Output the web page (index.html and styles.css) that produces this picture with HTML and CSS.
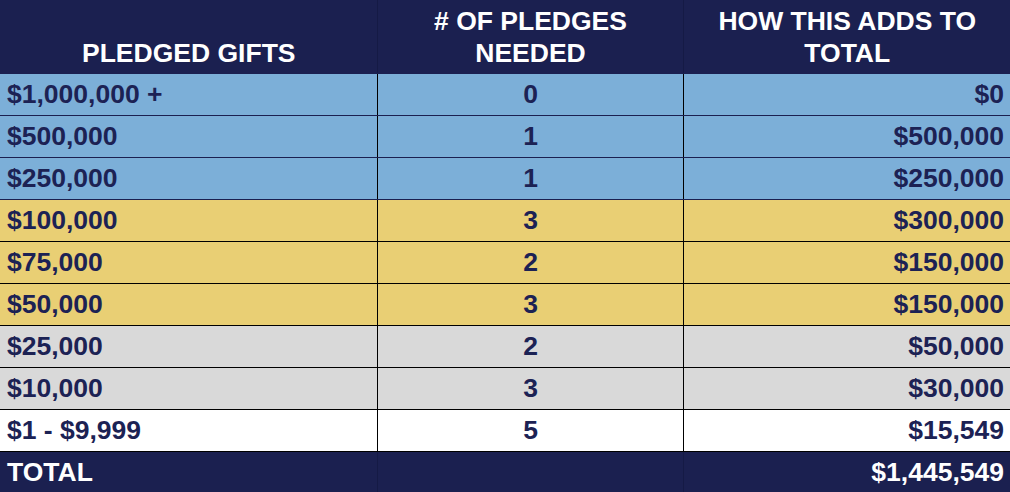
FILE: index.html
```html
<!DOCTYPE html>
<html>
<head>
<meta charset="utf-8">
<link rel="stylesheet" href="styles.css">
</head>
<body>
<table class="gifts">
  <colgroup>
    <col class="c1">
    <col class="c2">
    <col class="c3">
  </colgroup>
  <thead>
    <tr class="head">
      <th class="center">PLEDGED GIFTS</th>
      <th class="center"># OF PLEDGES<br>NEEDED</th>
      <th class="center">HOW THIS ADDS TO<br>TOTAL</th>
    </tr>
  </thead>
  <tbody>
    <tr class="blue first"><td>$1,000,000 +</td><td class="center">0</td><td class="right">$0</td></tr>
    <tr class="blue"><td>$500,000</td><td class="center">1</td><td class="right">$500,000</td></tr>
    <tr class="blue"><td>$250,000</td><td class="center">1</td><td class="right">$250,000</td></tr>
    <tr class="gold"><td>$100,000</td><td class="center">3</td><td class="right">$300,000</td></tr>
    <tr class="gold"><td>$75,000</td><td class="center">2</td><td class="right">$150,000</td></tr>
    <tr class="gold"><td>$50,000</td><td class="center">3</td><td class="right">$150,000</td></tr>
    <tr class="grey"><td>$25,000</td><td class="center">2</td><td class="right">$50,000</td></tr>
    <tr class="grey"><td>$10,000</td><td class="center">3</td><td class="right">$30,000</td></tr>
    <tr class="white"><td>$1 - $9,999</td><td class="center">5</td><td class="right">$15,549</td></tr>
  </tbody>
  <tfoot>
    <tr class="total"><td>TOTAL</td><td></td><td class="right">$1,445,549</td></tr>
  </tfoot>
</table>
</body>
</html>
```

FILE: styles.css
```css
html, body {
  margin: 0;
  padding: 0;
  background: #ffffff;
}

.gifts {
  width: 1010px;
  border-collapse: collapse;
  table-layout: fixed;
  font-family: "Liberation Sans", Arial, sans-serif;
  font-weight: bold;
  font-size: 26.5px;
  color: #1c2254;
}

.c1 { width: 377px; }
.c2 { width: 306px; }
.c3 { width: 327px; }

.gifts th,
.gifts td {
  padding: 0 6px 0 7px;
  white-space: nowrap;
  border: 1px solid #000;
  line-height: 32px;
}

.head th {
  background: #1b2050;
  color: #ffffff;
  height: 73px;
  vertical-align: bottom;
  padding-bottom: 4px;
  padding-top: 0;
  border-top: none;
  border-left: none;
  border-right: 1px solid #151a45;
  border-bottom: 1px solid #1b2050;
  box-sizing: border-box;
}

.head th:last-child { border-right: none; }

.gifts tbody td {
  height: 42px;
  box-sizing: border-box;
  vertical-align: middle;
}

.gifts tbody td:first-child { border-left: none; }
.gifts tbody td:last-child { border-right: none; }

.center { text-align: center; }
.right { text-align: right; }

.blue td { background: #7cafd8; border-bottom-color: #1b2050; }
.blue td { border-top-color: #1b2050; }
.gold td { background: #e9cf74; }
.grey td { background: #d9d9d9; }
.white td { background: #ffffff; }

.total td {
  background: #1b2050;
  color: #ffffff;
  height: 41px;
  box-sizing: border-box;
  border: none;
  border-left: 1px solid #151a45;
}

.total td:first-child { border-left: none; }
```
